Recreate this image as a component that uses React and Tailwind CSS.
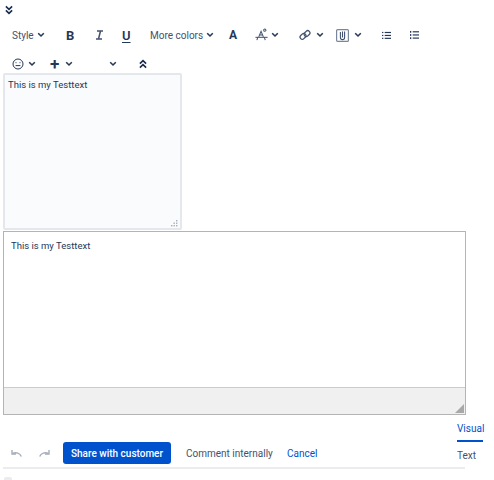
import React from "react";

const Chevron = ({ className = "" }) => (
  <svg className={`h-[8px] w-[8px] ${className}`} viewBox="0 0 10 8" fill="none" stroke="#253858" strokeWidth="2">
    <path d="M1.5 1.8L5 5.2L8.5 1.8" />
  </svg>
);

const DoubleChevron = ({ up }) => (
  <svg className="h-[10px] w-[8px]" viewBox="0 0 9 10" fill="none" stroke="#172b4d" strokeWidth="1.8">
    {up ? <path d="M1 4.5L4.5 1.2L8 4.5M1 9L4.5 5.7L8 9" /> : <path d="M1 1L4.5 4.3L8 1M1 5.5L4.5 8.8L8 5.5" />}
  </svg>
);

const Smiley = () => (
  <svg className="h-[12px] w-[12px]" viewBox="0 0 12 12" fill="none" stroke="#253858" strokeWidth="1">
    <circle cx="6" cy="6" r="5" />
    <path d="M3.6 7.6h4.8" />
    <path d="M4 4.2v1M8 4.2v1" />
  </svg>
);

const TextEffect = () => (
  <svg className="h-[14px] w-[14px]" viewBox="0 0 15 14" fill="none" stroke="#42526e" strokeWidth="1.1">
    <path d="M4 9L6.5 3L9 9M5 7h3" />
    <circle cx="10.5" cy="1.8" r="1.2" />
    <path d="M0.5 9.5h13" />
    <path d="M3 9.5L2 12.5M10 9.5L11 12.5" />
  </svg>
);

const LinkIcon = () => (
  <svg className="h-[12px] w-[12px]" viewBox="0 0 12 12" fill="none" stroke="#42526e" strokeWidth="1.3">
    <rect x="0.8" y="5.2" width="6.4" height="4.4" rx="2.2" transform="rotate(-45 4 7.4)" />
    <rect x="4.8" y="2.4" width="6.4" height="4.4" rx="2.2" transform="rotate(-45 8 4.6)" />
  </svg>
);

const AttachIcon = () => (
  <svg className="h-[13px] w-[13px]" viewBox="0 0 13 13" fill="none">
    <rect x="0.6" y="0.6" width="11.8" height="11.8" rx="1" stroke="#7a8699" strokeWidth="1.2" />
    <path d="M4.4 3v5.5a2.1 2.1 0 0 0 4.2 0V2.5M6.5 2.5v6" stroke="#42526e" strokeWidth="1.1" />
  </svg>
);

const ItalicIcon = () => (
  <svg className="h-[10px] w-[9px]" viewBox="0 0 9 10" fill="none" stroke="#42526e" strokeWidth="1.5">
    <path d="M2 1h6M1 9h6M5.5 1L3.5 9" />
  </svg>
);

const BulletList = () => (
  <svg className="h-[9px] w-[9px]" viewBox="0 0 10 9" fill="#253858">
    <rect x="0" y="0.5" width="1.5" height="1.3" />
    <rect x="0" y="3.8" width="1.5" height="1.3" />
    <rect x="0" y="7" width="1.5" height="1.3" />
    <rect x="3" y="0.5" width="7" height="1.3" />
    <rect x="3" y="3.8" width="7" height="1.3" />
    <rect x="3" y="7" width="7" height="1.3" />
  </svg>
);

const NumberList = () => (
  <svg className="h-[10px] w-[9px]" viewBox="0 0 10 10" fill="#253858">
    <rect x="0" y="0.5" width="1.4" height="2" />
    <rect x="0" y="4" width="1.4" height="2" />
    <rect x="0" y="7.5" width="1.4" height="2" />
    <rect x="3" y="0.8" width="7" height="1.3" />
    <rect x="3" y="4.3" width="7" height="1.3" />
    <rect x="3" y="7.8" width="7" height="1.3" />
  </svg>
);

const UndoIcon = ({ redo }) => (
  <svg className={`h-[8px] w-[11px] ${redo ? "-scale-x-100" : ""}`} viewBox="0 0 11 8" fill="none" stroke="#a5adba" strokeWidth="1.4">
    <path d="M10.3 7.5C9 4 5 3 1.5 4.5" />
    <path d="M1 1v4h4" />
  </svg>
);

const Grip = ({ color }) => (
  <svg className="h-[9px] w-[9px]" viewBox="0 0 9 9" fill={color}>
    <path d="M9 0V9H0Z" />
  </svg>
);

const DotGrip = () => (
  <svg className="h-[7px] w-[7px]" viewBox="0 0 7 7" fill="#a5adba">
    <rect x="5" y="0" width="1.4" height="1.4" />
    <rect x="2.5" y="2.5" width="1.4" height="1.4" />
    <rect x="5" y="2.5" width="1.4" height="1.4" />
    <rect x="0" y="5" width="1.4" height="1.4" />
    <rect x="2.5" y="5" width="1.4" height="1.4" />
    <rect x="5" y="5" width="1.4" height="1.4" />
  </svg>
);

export default function App() {
  return (
    <div className="relative h-[480px] w-[494px] overflow-hidden bg-white font-['Roboto',sans-serif] text-[10px] text-[#253858]">
      <div className="flex h-[20px] items-start pl-[5px] pt-[5px]">
        <DoubleChevron />
      </div>

      {/* Toolbar */}
      <div className="flex h-[30px] items-center whitespace-nowrap">
        <span className="ml-[12px] w-[20px] text-[#42526e]">Style</span>
        <Chevron className="ml-[5px]" />
        <span className="ml-[21px] w-[10px] text-[13px] font-bold leading-none">B</span>
        <span className="ml-[19px] flex w-[9px]"><ItalicIcon /></span>
        <span className="ml-[18px] w-[10px] text-[13px] font-semibold leading-none underline decoration-1 underline-offset-2">U</span>
        <span className="ml-[18px] w-[51px] text-[#42526e]">More colors</span>
        <Chevron className="ml-[5px]" />
        <span className="ml-[15px] w-[10px] text-[12px] font-bold leading-none">A</span>
        <span className="ml-[16px]"><TextEffect /></span>
        <Chevron className="ml-[2px]" />
        <span className="ml-[20px]"><LinkIcon /></span>
        <Chevron className="ml-[5px]" />
        <span className="ml-[12px]"><AttachIcon /></span>
        <Chevron className="ml-[5px]" />
        <span className="ml-[20px]"><BulletList /></span>
        <span className="ml-[19px]"><NumberList /></span>
      </div>

      <div className="mt-[2px] flex h-[24px] items-center pl-[12px]">
        <Smiley />
        <Chevron className="ml-[4px]" />
        <span className="ml-[14px] text-[17px] font-semibold leading-none">+</span>
        <Chevron className="ml-[6px]" />
        <Chevron className="ml-[36px]" />
        <span className="ml-[22px]"><DoubleChevron up /></span>
      </div>

      {/* Editors */}
      <div className="relative ml-[3px] mt-[-3px] h-[157px] w-[179px] rounded-[2px] border-2 border-[#e4e7ec] bg-[#fafbfc] px-[3px] pt-[1px]">
        <p className="text-[9.5px] leading-[18px]">This is my Testtext</p>
        <span className="absolute bottom-[1px] right-[2px] flex"><DotGrip /></span>
      </div>

      <div className="ml-[3px] mt-[1px] flex h-[184px] w-[463px] flex-col border border-[#b4b4b4]">
        <div className="flex-1 bg-white px-[7px] py-[5px]">
          <p className="text-[9.5px] leading-[18px]">This is my Testtext</p>
        </div>
        <div className="flex h-[27px] items-end justify-end border-t border-[#cccccc] bg-[#f0f0f0] p-[1px]">
          <Grip color="#a8a8a8" />
        </div>
      </div>

      {/* Footer */}
      <div className="ml-[3px] mt-[6px] flex w-[480px] items-start whitespace-nowrap">
        <div className="w-[462px]">
          <div className="mt-[21px] flex h-[22px] items-center pl-[8px]">
            <UndoIcon />
            <span className="ml-[17px]"><UndoIcon redo /></span>
            <button className="ml-[13px] h-[22px] w-[108px] rounded-[3px] bg-[#0052cc] text-[10px] font-medium text-white">Share with customer</button>
            <span className="ml-[15px] w-[86px] text-[#42526e]">Comment internally</span>
            <span className="ml-[15px] text-[#0052cc]">Cancel</span>
          </div>
          <div className="mt-[3px] h-[2px] bg-[#ebecf0]" />
          <div className="ml-[1px] mt-[8px] h-[10px] w-[8px] rounded-[2px] bg-[#ebecf0]" />
        </div>
        <div className="ml-[-8px] flex w-[26px] flex-col">
          <span className="leading-[16px] text-[#0052cc]">Visual</span>
          <div className="mt-[3px] h-[2px] bg-[#0052cc]" />
          <span className="mt-[6px] leading-[16px] text-[#42526e]">Text</span>
        </div>
      </div>
    </div>
  );
}
